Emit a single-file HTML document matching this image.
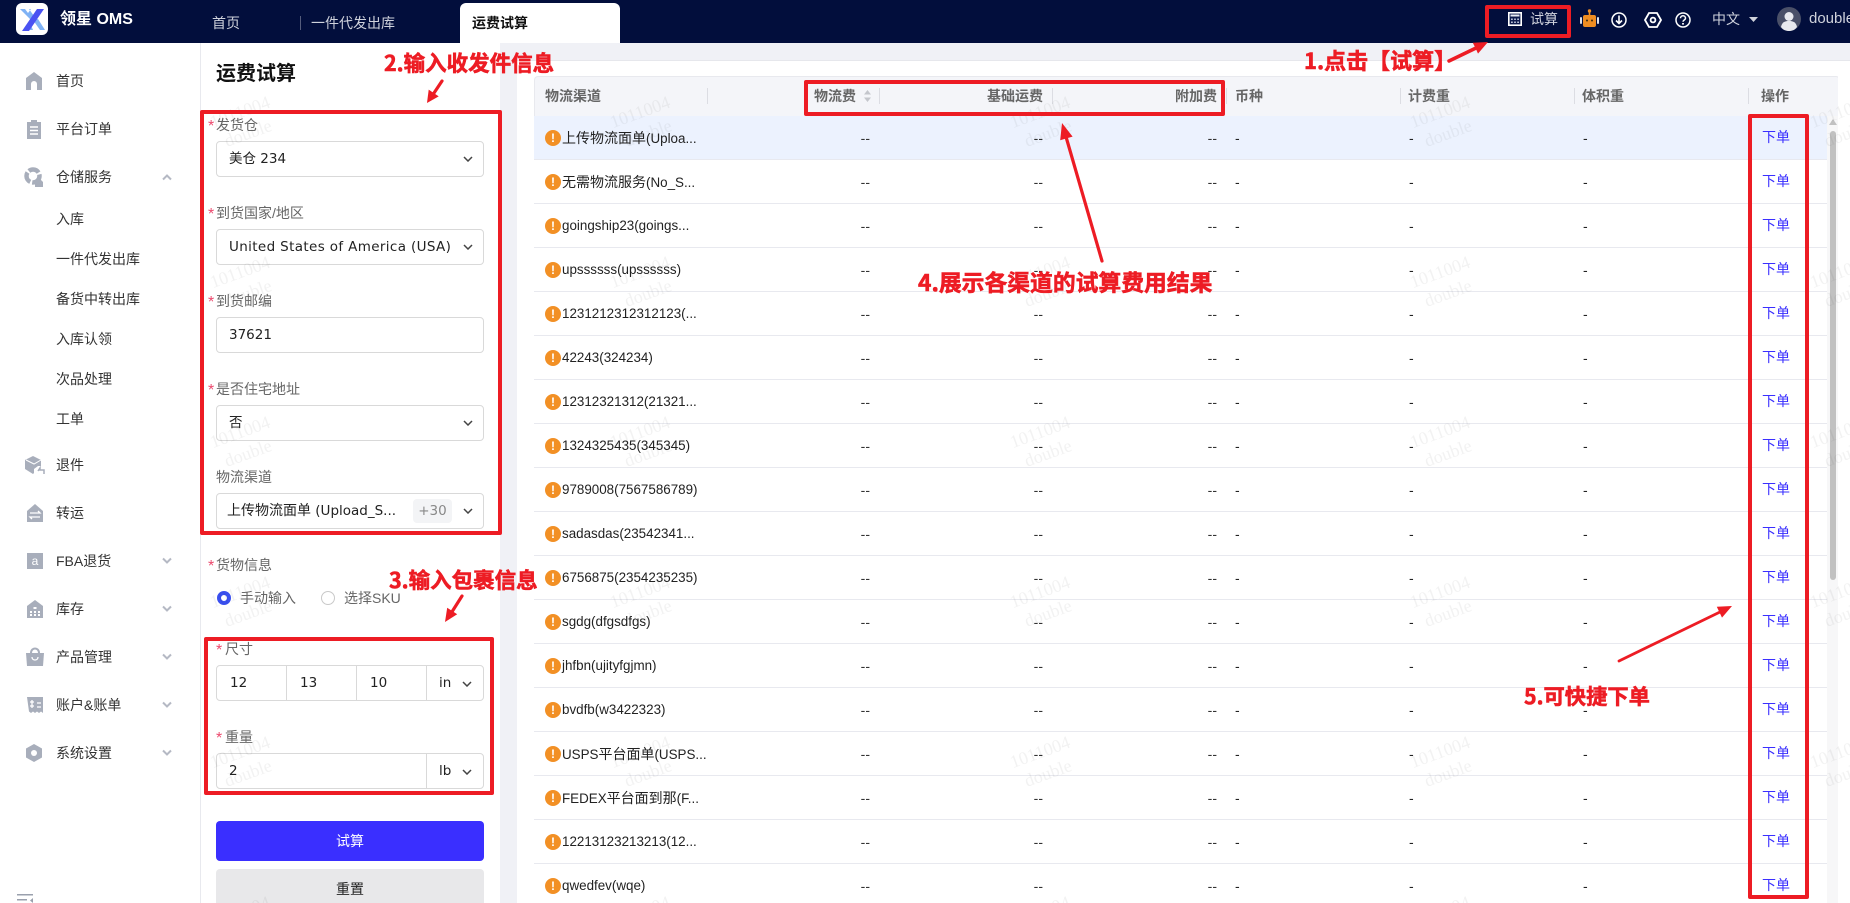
<!DOCTYPE html>
<html lang="zh-CN"><head><meta charset="utf-8"><title>运费试算</title>
<style>
html,body{margin:0;padding:0;width:1850px;height:903px;overflow:hidden;background:#fff}
body{position:relative;font-family:"Liberation Sans","Noto Sans CJK SC",sans-serif;font-size:14px;color:#222}
.a{position:absolute;white-space:nowrap}
#top{position:absolute;left:0;top:0;width:1850px;height:43px;background:#020e3c}
.t{position:absolute;line-height:20px;white-space:nowrap}
.s{position:absolute;left:56px;line-height:20px;color:#333;white-space:nowrap}
.ic{position:absolute;left:24px;width:20px;height:20px}
.ch{position:absolute;left:161px;width:12px;height:8px}
.l{position:absolute;line-height:20px;color:#666;white-space:nowrap}
.l i{font-style:normal;color:#ec4a6e;display:inline-block;width:8px;font-size:16px;vertical-align:-1px;line-height:14px}
.l i.w{width:9px}
.f{position:absolute;left:216px;width:266px;height:34px;border:1px solid #d9d9d9;border-radius:4px;background:transparent}
.v{position:absolute;font-family:"DejaVu Sans","Noto Sans CJK SC",sans-serif;font-size:13.5px;line-height:20px;color:#222;white-space:nowrap}
.dn{position:absolute;width:10px;height:6px}
.th{position:absolute;top:86px;line-height:20px;color:#666;font-weight:bold;white-space:nowrap}
.dv{position:absolute;top:88px;width:1px;height:16px;background:#dcdde3}
.r{position:relative;height:43px;border-bottom:1px solid #e8e9ef;width:1293px}
.r span{position:absolute;top:0;line-height:44px;white-space:nowrap}
.r .e{left:11px;top:14px;width:16px;height:16px;border-radius:50%;background:#f29025;color:#fff;font-weight:bold;font-size:12px;line-height:16px;text-align:center}
.r .n{left:28px;font-size:13.4px;color:#222}
.r .n b{font-weight:normal;font-size:14px}
.r .d1,.r .d2,.r .d3{width:30px;text-align:right;color:#333}
.r .d1{left:306px}.r .d2{left:479px}.r .d3{left:653px}
.r .x{left:701px}.r .y{left:875px}.r .z{left:1049px}
.r .o{left:1228px;color:#3a2fff;top:-1px}
.box{position:absolute;border:4px solid #ed1c24;border-radius:2px;box-sizing:border-box}
.ann{position:absolute;color:#ed1c24;font-family:"Noto Sans CJK SC","Liberation Sans",sans-serif;font-weight:bold;line-height:28px;white-space:nowrap;-webkit-text-stroke:.6px #ed1c24}
</style></head><body>

<!-- main backgrounds -->
<div class="a" style="left:200px;top:43px;width:1px;height:860px;background:#e8e9ee"></div>
<div class="a" style="left:500px;top:43px;width:1350px;height:860px;background:#f0f1f6"></div>
<div class="a" style="left:517px;top:60px;width:1333px;height:843px;background:#fff;border-top:1px solid #e6e7ec;box-sizing:border-box"></div>

<!-- header bar -->
<div id="top">
<svg class="a" style="left:16px;top:3px" width="32" height="32" viewBox="0 0 32 32"><rect width="32" height="32" rx="6" fill="#fff"/><path d="M4 6h5l3 4 3-4h-2l5 7-3 4z" fill="#7fb2f5"/><path d="M17 17l5-1 7 11h-5zM14 20l3 7h-3z" fill="#7fb2f5"/><path d="M6 28L21 6h7L13 28z" fill="#4a52f2"/></svg>
<div class="t" style="left:60px;top:10px;color:#fff;font-size:16px;font-weight:bold">领星 OMS</div>
<div class="t" style="left:212px;top:13px;color:#cfd2dc">首页</div>
<div class="a" style="left:300px;top:16px;width:1px;height:14px;background:#555c7c"></div>
<div class="t" style="left:311px;top:13px;color:#cfd2dc">一件代发出库</div>
<div class="a" style="left:460px;top:3px;width:160px;height:40px;background:#fff;border-radius:6px 6px 0 0"></div>
<div class="t" style="left:472px;top:13px;color:#111;font-weight:bold">运费试算</div>
<svg class="a" style="left:1508px;top:12px" width="14" height="14" viewBox="0 0 14 14"><rect x=".8" y=".8" width="12.400" height="12.400" fill="#0d1a4c" stroke="#fff" stroke-width="1.600"/><rect x="2.500" y="2.500" width="9" height="2" fill="#e8eaf2"/><path d="M3 6.500h1.800v1.500H3zM6.100 6.500h1.800v1.500H6.100zM9.200 6.500H11v1.500H9.200zM3 9.500h1.800V11H3zM6.100 9.500h1.800V11H6.100zM9.200 9.500H11V11H9.200z" fill="#b8bfd6"/></svg>
<div class="t" style="left:1530px;top:9px;color:#cfd2dc">试算</div>
<svg class="a" style="left:1580px;top:9px" width="19" height="19" viewBox="0 0 19 19"><circle cx="9.500" cy="2" r="1.700" fill="#ef8d22"/><rect x="8.700" y="2" width="1.600" height="4" fill="#ef8d22"/><rect x="3" y="6" width="13" height="12" rx="2" fill="#ef8d22"/><rect x="0" y="8" width="2" height="7" rx="1" fill="#dfe2ea"/><rect x="17" y="8" width="2" height="7" rx="1" fill="#dfe2ea"/><circle cx="7" cy="11.500" r="1" fill="#3a2a10"/><circle cx="12" cy="11.500" r="1" fill="#3a2a10"/></svg>
<svg class="a" style="left:1611px;top:12px" width="16" height="16" viewBox="0 0 16 16" fill="none" stroke="#fff" stroke-width="1.500"><circle cx="8" cy="8" r="7"/><path d="M8 3.500v8M5 8.500l3 3 3-3" stroke-width="1.600"/></svg>
<svg class="a" style="left:1644px;top:12px" width="18" height="16" viewBox="0 0 18 16" fill="none" stroke="#fff" stroke-width="1.800"><path d="M5 1h8l4 7-4 7H5L1 8z"/><circle cx="9" cy="8" r="2.400"/></svg>
<svg class="a" style="left:1675px;top:12px" width="16" height="16" viewBox="0 0 16 16" fill="none" stroke="#fff" stroke-width="1.500"><circle cx="8" cy="8" r="7"/><path d="M5.500 6.200c0-3.200 5-3.200 5 0 0 1.800-2.500 1.800-2.500 3.600"/><path d="M8 11v1.600" stroke-width="1.800"/></svg>
<div class="t" style="left:1712px;top:9px;color:#cfd2dc">中文</div>
<svg class="a" style="left:1749px;top:17px" width="9" height="5" viewBox="0 0 9 5"><path d="M0 0h9L4.500 5z" fill="#cfd2dc"/></svg>
<svg class="a" style="left:1777px;top:7px" width="24" height="24" viewBox="0 0 24 24"><circle cx="12" cy="12" r="12" fill="#4a5068"/><circle cx="12" cy="9.500" r="4.500" fill="#e8e9ee"/><path d="M4 20c1-5 4-6 8-6s7 1 8 6c-2 3-5 4-8 4s-6-1-8-4z" fill="#e8e9ee"/></svg>
<div class="t" style="left:1809px;top:9px;color:#cfd2dc;font-size:15px">double</div>
</div>

<!-- sidebar -->
<svg class="ic" style="top:71px" viewBox="0 0 20 20"><path d="M10 1L2 7v12h5v-6a3 3 0 0 1 6 0v6h5V7z" fill="#a8aebb"/></svg>
<div class="s" style="top:71px">首页</div>
<svg class="ic" style="top:119px" viewBox="0 0 20 20"><path d="M3 3h4V1h6v2h4v17H3z" fill="#a8aebb"/><path d="M6 8h8M6 11.500h8M6 15h8" stroke="#fff" stroke-width="1.400"/></svg>
<div class="s" style="top:119px">平台订单</div>
<svg class="ic" style="top:167px" viewBox="0 0 20 20"><circle cx="9" cy="9" r="6.500" fill="none" stroke="#a8aebb" stroke-width="4.500" stroke-dasharray="11 2"/><path d="M11 15l4-4 4 4v5h-8z" fill="#a8aebb"/></svg>
<div class="s" style="top:167px">仓储服务</div>
<svg class="ch" style="top:173px" viewBox="0 0 12 8" fill="none" stroke="#b5b9c4" stroke-width="2"><path d="M2 6.500l4-4 4 4"/></svg>
<div class="s" style="top:209px">入库</div>
<div class="s" style="top:249px">一件代发出库</div>
<div class="s" style="top:289px">备货中转出库</div>
<div class="s" style="top:329px">入库认领</div>
<div class="s" style="top:369px">次品处理</div>
<div class="s" style="top:409px">工单</div>
<svg class="ic" style="top:455px;left:25px" viewBox="0 0 20 20"><path d="M8 1l8 4v6h-3l-4 3v4l-1 1-8-5V5z" fill="#a8aebb"/><path d="M1 5l8 4 7-4" stroke="#fff" fill="none"/><path d="M13 16l2-3v2h4v4" stroke="#a8aebb" stroke-width="1.500" fill="none"/></svg>
<div class="s" style="top:455px">退件</div>
<svg class="ic" style="top:503px;left:25px" viewBox="0 0 20 20"><path d="M10 1l8 7v11H2V8z" fill="#a8aebb"/><path d="M5 10h10l-2-2M15 14H5l2 2" stroke="#fff" stroke-width="1.300" fill="none"/></svg>
<div class="s" style="top:503px">转运</div>
<svg class="ic" style="top:551px;left:25px" viewBox="0 0 20 20"><rect x="2" y="2" width="16" height="16" fill="#a8aebb"/><text x="10" y="14" text-anchor="middle" font-size="12" fill="#fff" font-family="Liberation Sans">a</text></svg>
<div class="s" style="top:551px">FBA退货</div>
<svg class="ch" style="top:557px" viewBox="0 0 12 8" fill="none" stroke="#b5b9c4" stroke-width="2"><path d="M2 1.500l4 4 4-4"/></svg>
<svg class="ic" style="top:599px;left:25px" viewBox="0 0 20 20"><path d="M10 1l8 6v12H2V7z" fill="#a8aebb"/><path d="M8.500 8h3v2h-3zM5 12h2v2H5zM9 12h2v2H9zM13 12h2v2h-2zM5 15h2v2H5zM9 15h2v2H9zM13 15h2v2h-2z" fill="#fff"/></svg>
<div class="s" style="top:599px">库存</div>
<svg class="ch" style="top:605px" viewBox="0 0 12 8" fill="none" stroke="#b5b9c4" stroke-width="2"><path d="M2 1.500l4 4 4-4"/></svg>
<svg class="ic" style="top:647px;left:25px" viewBox="0 0 20 20"><path d="M1 6h18l-1 13H2z" fill="#a8aebb"/><path d="M6 6c0-6 8-6 8 0" stroke="#a8aebb" stroke-width="2" fill="none"/><path d="M7 10c0 4 6 4 6 0" stroke="#fff" stroke-width="1.300" fill="none"/></svg>
<div class="s" style="top:647px">产品管理</div>
<svg class="ch" style="top:653px" viewBox="0 0 12 8" fill="none" stroke="#b5b9c4" stroke-width="2"><path d="M2 1.500l4 4 4-4"/></svg>
<svg class="ic" style="top:695px;left:25px" viewBox="0 0 20 20"><path d="M2 2h16v16l-2-1.500-2 1.500-2-1.500-2 1.500-2-1.500-2 1.500-2-1.500z" fill="#a8aebb"/><path d="M5 7h4M5 11h4M7 5v8M12 8h4M12 12h4" stroke="#fff" stroke-width="1.300"/></svg>
<div class="s" style="top:695px">账户&amp;账单</div>
<svg class="ch" style="top:701px" viewBox="0 0 12 8" fill="none" stroke="#b5b9c4" stroke-width="2"><path d="M2 1.500l4 4 4-4"/></svg>
<svg class="ic" style="top:743px;left:24px" viewBox="0 0 20 20"><path d="M10 1l8 4.500v9L10 19l-8-4.500v-9z" fill="#a8aebb"/><circle cx="10" cy="10" r="3" fill="#fff"/></svg>
<div class="s" style="top:743px">系统设置</div>
<svg class="ch" style="top:749px" viewBox="0 0 12 8" fill="none" stroke="#b5b9c4" stroke-width="2"><path d="M2 1.500l4 4 4-4"/></svg>
<svg class="a" style="left:17px;top:893px" width="17" height="10" viewBox="0 0 17 10"><path d="M0 1h16v1.500H0zM0 6h10v1.500H0z" fill="#9aa0ad"/><path d="M16 5l-3 2.500 3 2.500z" fill="#9aa0ad"/></svg>

<!-- form -->
<div class="a" style="left:216px;top:60px;font-size:20px;font-weight:bold;line-height:28px;color:#111">运费试算</div>

<div class="l" style="left:208px;top:115px"><i>*</i>发货仓</div>
<div class="f" style="top:141px"></div><div class="v" style="left:229px;top:149px">美仓 234</div>
<svg class="dn" style="left:463px;top:156px" viewBox="0 0 10 6" fill="none" stroke="#444" stroke-width="1.500"><path d="M1 1l4 4 4-4"/></svg>

<div class="l" style="left:208px;top:203px"><i>*</i>到货国家/地区</div>
<div class="f" style="top:229px"></div><div class="v" style="left:229px;top:237px;letter-spacing:.36px">United States of America (USA)</div>
<svg class="dn" style="left:463px;top:244px" viewBox="0 0 10 6" fill="none" stroke="#444" stroke-width="1.500"><path d="M1 1l4 4 4-4"/></svg>

<div class="l" style="left:208px;top:291px"><i>*</i>到货邮编</div>
<div class="f" style="top:317px"></div><div class="v" style="left:229px;top:325px">37621</div>

<div class="l" style="left:208px;top:379px"><i>*</i>是否住宅地址</div>
<div class="f" style="top:405px"></div><div class="v" style="left:229px;top:413px">否</div>
<svg class="dn" style="left:463px;top:420px" viewBox="0 0 10 6" fill="none" stroke="#444" stroke-width="1.500"><path d="M1 1l4 4 4-4"/></svg>

<div class="l" style="left:216px;top:467px">物流渠道</div>
<div class="f" style="top:493px"></div><div class="v" style="left:227px;top:501px"><span style="font-size:14px">上传物流面单</span> (Upload_S...</div>
<div class="a" style="left:413px;top:499px;width:39px;height:24px;background:#f3f4f6;border-radius:4px;color:#888;text-align:center;line-height:24px;font-family:'DejaVu Sans',sans-serif;font-size:13.5px">+30</div>
<svg class="dn" style="left:463px;top:508px" viewBox="0 0 10 6" fill="none" stroke="#444" stroke-width="1.500"><path d="M1 1l4 4 4-4"/></svg>

<div class="l" style="left:208px;top:555px"><i>*</i>货物信息</div>
<div class="a" style="left:217px;top:591px;width:14px;height:14px;border-radius:50%;background:#fff;border:4px solid #3a50f0;box-sizing:border-box"></div>
<div class="l" style="left:240px;top:588px">手动输入</div>
<div class="a" style="left:321px;top:591px;width:14px;height:14px;border-radius:50%;background:#fff;border:1px solid #c9c9c9;box-sizing:border-box"></div>
<div class="l" style="left:344px;top:588px">选择SKU</div>

<div class="l" style="left:216px;top:639px"><i class="w">*</i>尺寸</div>
<div class="f" style="top:665px"></div>
<div class="a" style="left:286px;top:665px;width:1px;height:36px;background:#d9d9d9"></div>
<div class="a" style="left:356px;top:665px;width:1px;height:36px;background:#d9d9d9"></div>
<div class="a" style="left:426px;top:665px;width:1px;height:36px;background:#d9d9d9"></div>
<div class="v" style="left:230px;top:673px">12</div><div class="v" style="left:300px;top:673px">13</div><div class="v" style="left:370px;top:673px">10</div><div class="v" style="left:439px;top:673px">in</div>
<svg class="dn" style="left:462px;top:681px" viewBox="0 0 10 6" fill="none" stroke="#444" stroke-width="1.500"><path d="M1 1l4 4 4-4"/></svg>

<div class="l" style="left:216px;top:727px"><i class="w">*</i>重量</div>
<div class="f" style="top:753px"></div>
<div class="a" style="left:426px;top:753px;width:1px;height:36px;background:#d9d9d9"></div>
<div class="v" style="left:229px;top:761px">2</div><div class="v" style="left:439px;top:761px">lb</div>
<svg class="dn" style="left:462px;top:769px" viewBox="0 0 10 6" fill="none" stroke="#444" stroke-width="1.500"><path d="M1 1l4 4 4-4"/></svg>

<div class="a" style="left:216px;top:821px;width:268px;height:40px;background:#3a2fff;border-radius:4px;color:#fff;text-align:center;line-height:40px">试算</div>
<div class="a" style="left:216px;top:869px;width:268px;height:40px;background:#e8e8ea;border-radius:4px;color:#222;text-align:center;line-height:40px">重置</div>

<!-- table -->
<div class="a" style="left:534px;top:76px;width:1304px;height:39px;background:#f4f5f9;border:1px solid #e8e9ee;border-bottom:1px solid #e4e5ea;border-radius:4px 4px 0 0;box-sizing:content-box"></div>
<div class="th" style="left:545px">物流渠道</div><div class="dv" style="left:707px"></div>
<div class="th" style="left:814px">物流费</div>
<svg class="a" style="left:863px;top:89px" width="9" height="14" viewBox="0 0 9 14"><path d="M4.500 1l3.500 4.500H1zM4.500 13L1 8.500h7z" fill="#c4c6cc"/></svg>
<div class="dv" style="left:879px"></div>
<div class="th" style="left:987px">基础运费</div><div class="dv" style="left:1052px"></div>
<div class="th" style="left:1175px">附加费</div><div class="dv" style="left:1226px"></div>
<div class="th" style="left:1235px">币种</div><div class="dv" style="left:1400px"></div>
<div class="th" style="left:1408px">计费重</div><div class="dv" style="left:1574px"></div>
<div class="th" style="left:1582px">体积重</div><div class="dv" style="left:1748px"></div>
<div class="th" style="left:1761px">操作</div>

<div class="a" style="left:534px;top:116px;width:1293px;white-space:normal">
<div class="r" style="background:#ecf2fe"><span class="e">!</span><span class="n"><b>上传物流面单</b>(Uploa...</span><span class="d1">--</span><span class="d2">--</span><span class="d3">--</span><span class="x">-</span><span class="y">-</span><span class="z">-</span><span class="o">下单</span></div>
<div class="r"><span class="e">!</span><span class="n"><b>无需物流服务</b>(No_S...</span><span class="d1">--</span><span class="d2">--</span><span class="d3">--</span><span class="x">-</span><span class="y">-</span><span class="z">-</span><span class="o">下单</span></div>
<div class="r"><span class="e">!</span><span class="n">goingship23(goings...</span><span class="d1">--</span><span class="d2">--</span><span class="d3">--</span><span class="x">-</span><span class="y">-</span><span class="z">-</span><span class="o">下单</span></div>
<div class="r"><span class="e">!</span><span class="n">upssssss(upssssss)</span><span class="d1">--</span><span class="d2">--</span><span class="d3">--</span><span class="x">-</span><span class="y">-</span><span class="z">-</span><span class="o">下单</span></div>
<div class="r"><span class="e">!</span><span class="n">1231212312312123(...</span><span class="d1">--</span><span class="d2">--</span><span class="d3">--</span><span class="x">-</span><span class="y">-</span><span class="z">-</span><span class="o">下单</span></div>
<div class="r"><span class="e">!</span><span class="n">42243(324234)</span><span class="d1">--</span><span class="d2">--</span><span class="d3">--</span><span class="x">-</span><span class="y">-</span><span class="z">-</span><span class="o">下单</span></div>
<div class="r"><span class="e">!</span><span class="n">12312321312(21321...</span><span class="d1">--</span><span class="d2">--</span><span class="d3">--</span><span class="x">-</span><span class="y">-</span><span class="z">-</span><span class="o">下单</span></div>
<div class="r"><span class="e">!</span><span class="n">1324325435(345345)</span><span class="d1">--</span><span class="d2">--</span><span class="d3">--</span><span class="x">-</span><span class="y">-</span><span class="z">-</span><span class="o">下单</span></div>
<div class="r"><span class="e">!</span><span class="n">9789008(7567586789)</span><span class="d1">--</span><span class="d2">--</span><span class="d3">--</span><span class="x">-</span><span class="y">-</span><span class="z">-</span><span class="o">下单</span></div>
<div class="r"><span class="e">!</span><span class="n">sadasdas(23542341...</span><span class="d1">--</span><span class="d2">--</span><span class="d3">--</span><span class="x">-</span><span class="y">-</span><span class="z">-</span><span class="o">下单</span></div>
<div class="r"><span class="e">!</span><span class="n">6756875(2354235235)</span><span class="d1">--</span><span class="d2">--</span><span class="d3">--</span><span class="x">-</span><span class="y">-</span><span class="z">-</span><span class="o">下单</span></div>
<div class="r"><span class="e">!</span><span class="n">sgdg(dfgsdfgs)</span><span class="d1">--</span><span class="d2">--</span><span class="d3">--</span><span class="x">-</span><span class="y">-</span><span class="z">-</span><span class="o">下单</span></div>
<div class="r"><span class="e">!</span><span class="n">jhfbn(ujityfgjmn)</span><span class="d1">--</span><span class="d2">--</span><span class="d3">--</span><span class="x">-</span><span class="y">-</span><span class="z">-</span><span class="o">下单</span></div>
<div class="r"><span class="e">!</span><span class="n">bvdfb(w3422323)</span><span class="d1">--</span><span class="d2">--</span><span class="d3">--</span><span class="x">-</span><span class="y">-</span><span class="z">-</span><span class="o">下单</span></div>
<div class="r"><span class="e">!</span><span class="n">USPS<b>平台面单</b>(USPS...</span><span class="d1">--</span><span class="d2">--</span><span class="d3">--</span><span class="x">-</span><span class="y">-</span><span class="z">-</span><span class="o">下单</span></div>
<div class="r"><span class="e">!</span><span class="n">FEDEX<b>平台面到那</b>(F...</span><span class="d1">--</span><span class="d2">--</span><span class="d3">--</span><span class="x">-</span><span class="y">-</span><span class="z">-</span><span class="o">下单</span></div>
<div class="r"><span class="e">!</span><span class="n">12213123213213(12...</span><span class="d1">--</span><span class="d2">--</span><span class="d3">--</span><span class="x">-</span><span class="y">-</span><span class="z">-</span><span class="o">下单</span></div>
<div class="r"><span class="e">!</span><span class="n">qwedfev(wqe)</span><span class="d1">--</span><span class="d2">--</span><span class="d3">--</span><span class="x">-</span><span class="y">-</span><span class="z">-</span><span class="o">下单</span></div>
</div>

<!-- scrollbar -->
<div class="a" style="left:1827px;top:116px;width:11px;height:787px;background:#f7f7f8"></div>
<svg class="a" style="left:1829px;top:119px" width="8" height="6" viewBox="0 0 8 6"><path d="M4 0l4 6H0z" fill="#c1c1c1"/></svg>
<div class="a" style="left:1830px;top:131px;width:6px;height:449px;background:#c1c1c1;border-radius:3px"></div>
<div class="a" style="left:1838px;top:76px;width:12px;height:827px;background:#fff"></div>

<!-- watermark -->
<svg class="a" style="left:0;top:0;pointer-events:none" width="1850" height="903">
<defs><pattern id="wm" width="400" height="160" patternUnits="userSpaceOnUse">
<g font-family="Liberation Serif" font-size="18" fill="#000" fill-opacity=".05" text-anchor="middle">
<text x="240" y="118" transform="rotate(-20 240 112)">1011004</text>
<text x="248" y="139" transform="rotate(-20 248 133)">double</text>
</g></pattern></defs>
<rect x="200" y="43" width="1650" height="860" fill="url(#wm)"/>
</svg>

<!-- annotation boxes -->
<div class="box" style="left:1485px;top:5px;width:86px;height:33px"></div>
<div class="box" style="left:200px;top:110px;width:302px;height:425px"></div>
<div class="box" style="left:204px;top:637px;width:290px;height:158px"></div>
<div class="box" style="left:804px;top:80px;width:421px;height:36px"></div>
<div class="box" style="left:1748px;top:114px;width:61px;height:785px"></div>

<div class="ann" style="left:1304px;top:46px;font-size:22px">1.点击【试算】</div>
<div class="ann" style="left:384px;top:49px;font-size:21.5px">2.输入收发件信息</div>
<div class="ann" style="left:389px;top:566px;font-size:21.5px">3.输入包裹信息</div>
<div class="ann" style="left:918px;top:268px;font-size:22.8px">4.展示各渠道的试算费用结果</div>
<div class="ann" style="left:1524px;top:682px;font-size:21.3px">5.可快捷下单</div>

<svg class="a" style="left:0;top:0;pointer-events:none" width="1850" height="903" fill="#ed1c24" stroke="#ed1c24">
<path d="M1449 61L1476 48" stroke-width="3.500" stroke-linecap="round"/><path stroke="none" d="M1488 42L1478 53.600 1475.500 48 1472.800 42.800z"/>
<path d="M442 81L434 93" stroke-width="3.200" stroke-linecap="round"/><path stroke="none" d="M427 103L438.700 96.400 433.700 93 428.700 89.600z"/>
<path d="M462 596L452.500 611" stroke-width="3.200" stroke-linecap="round"/><path stroke="none" d="M445 622L457.200 614.300 452.200 611 447.200 607.700z"/>
<path d="M1102 261L1066.500 138.500" stroke-width="3.200" stroke-linecap="round"/><path stroke="none" d="M1062 123L1072.600 136.600 1066.400 138.400 1060.200 140.200z"/>
<path d="M1619 661L1720 612" stroke-width="2.800" stroke-linecap="round"/><path stroke="none" d="M1732 606L1722 617.600 1719.400 612.200 1716.800 606.800z"/>
</svg>
</body></html>
